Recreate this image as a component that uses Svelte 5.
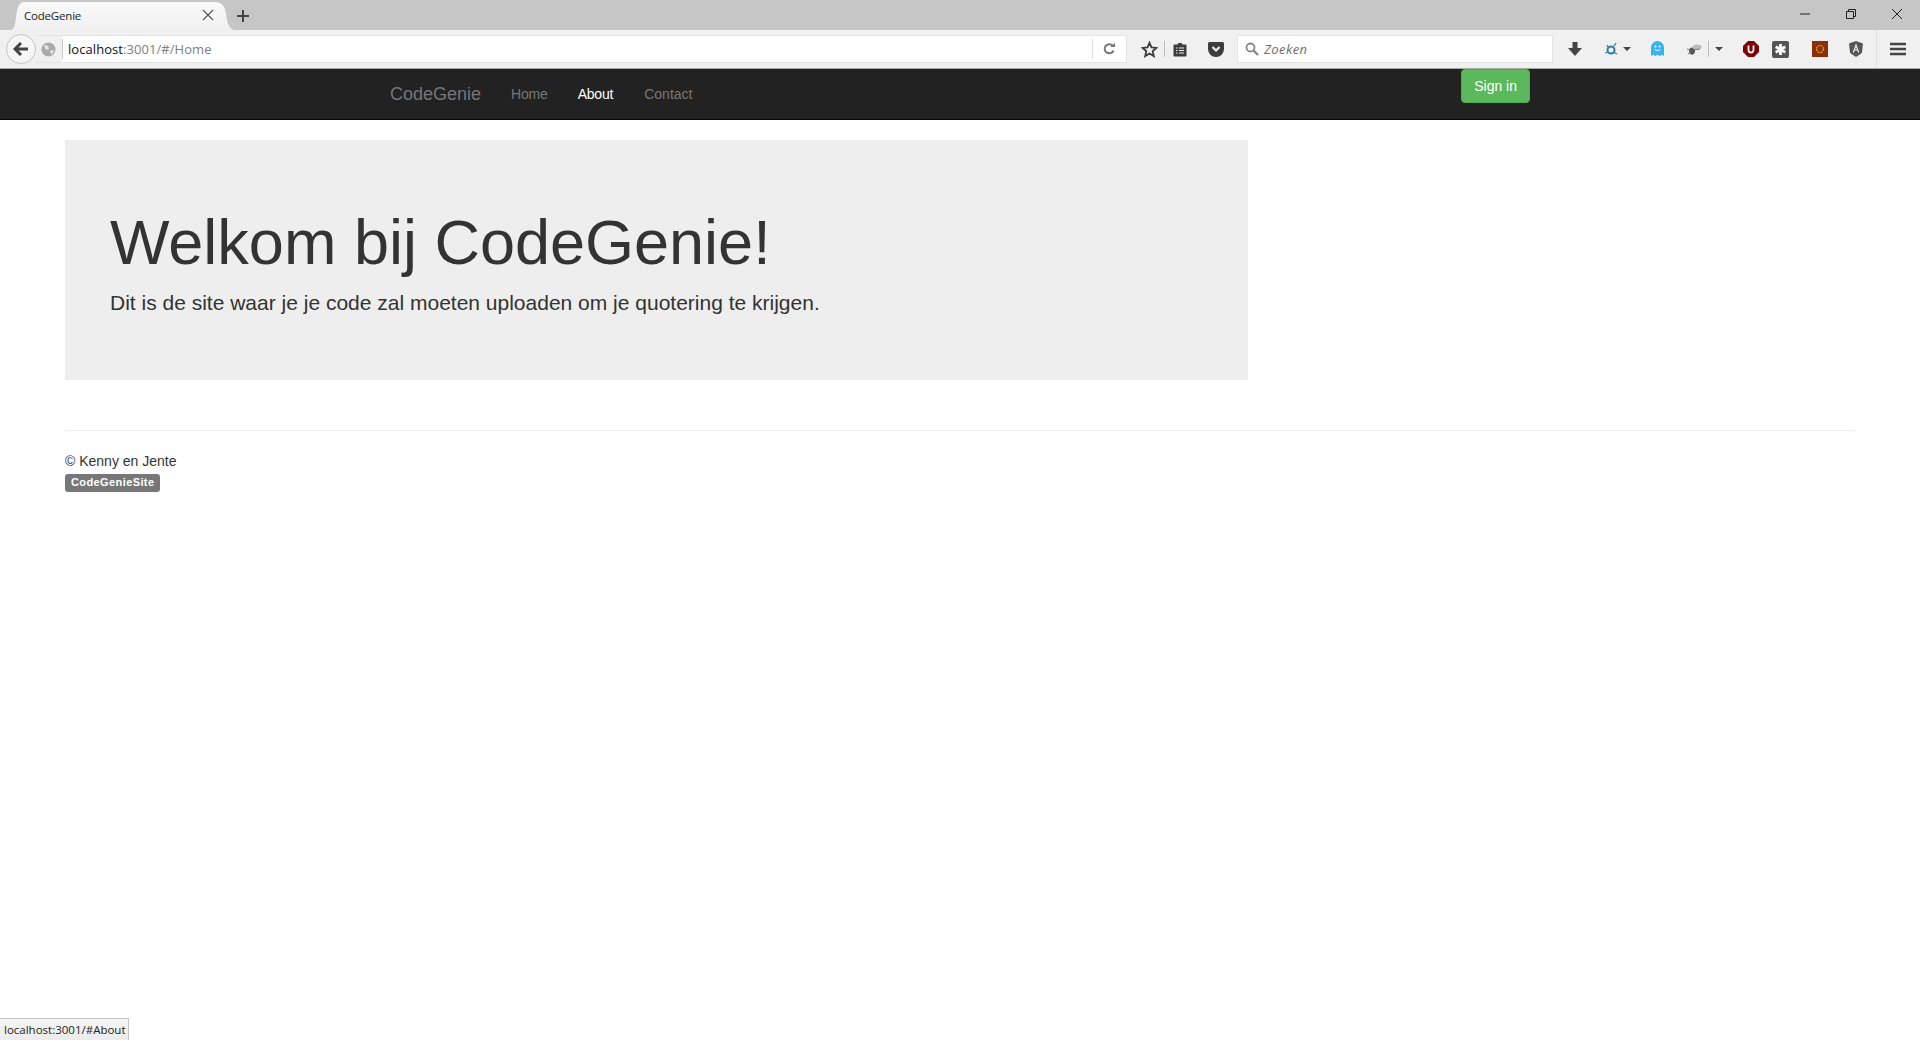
<script>
  const navItems = [
    { label: 'Home', active: false },
    { label: 'About', active: true },
    { label: 'Contact', active: false }
  ];
</script>

<div class="browser">
  <div class="tabstrip">
    <div class="tab">
      <svg class="flare" width="14" height="28" viewBox="0 0 14 28"><defs><linearGradient id="tg" x1="0" y1="0" x2="0" y2="1"><stop offset="0" stop-color="#f9f9f9"/><stop offset="1" stop-color="#f1f1f1"/></linearGradient></defs><path d="M0 28C4 28 5 24 6 16 7 6 9 0 14 0V28Z" fill="url(#tg)"/></svg>
      <div class="tab-body">
        <span class="tab-title">CodeGenie</span>
        <svg class="tab-close" width="12" height="12" viewBox="0 0 12 12"><path d="M1 1l10 10M11 1L1 11" stroke="#555" stroke-width="1.1" fill="none"/></svg>
      </div>
      <svg class="flare" width="21" height="28" viewBox="0 0 21 28"><path d="M0 0C8 0 11 4 12 12 13 22 16 28 21 28H0Z" fill="url(#tg)"/></svg>
    </div>
    <svg class="newtab" width="14" height="14" viewBox="0 0 14 14"><path d="M7 1v12M1 7h12" stroke="#444" stroke-width="2" fill="none"/></svg>
    <div class="winbtns">
      <svg width="12" height="12" viewBox="0 0 12 12"><path d="M1 6h10" stroke="#222" stroke-width="1"/></svg>
      <svg width="12" height="12" viewBox="0 0 12 12"><path d="M1.500 3.500h7v7h-7zM3.500 3.500v-2h7v7h-2" stroke="#222" stroke-width="1" fill="none"/></svg>
      <svg width="12" height="12" viewBox="0 0 12 12"><path d="M1 1l10 10M11 1L1 11" stroke="#222" stroke-width="1" fill="none"/></svg>
    </div>
  </div>

  <div class="toolbar">
    <div class="backbtn">
      <svg width="16" height="14" viewBox="0 0 16 14"><path d="M8 1L2 7l6 6M2.500 7H15" stroke="#444" stroke-width="3" fill="none"/></svg>
    </div>
    <div class="urlbar">
      <svg class="globe" width="15" height="15" viewBox="0 0 15 15"><circle cx="7.500" cy="7.500" r="7" fill="#aaa"/><path d="M3 3l4 1 1 3-3 1zM9 9l4-1-2 5z" fill="#e8e8e8"/></svg>
      <span class="urlsep"></span>
      <span class="url"><span class="host">localhost</span>:3001/#/Home</span>
      <span class="reloadsep"></span>
      <svg class="reload" width="14" height="14" viewBox="0 0 14 14"><path d="M11.500 8.500A4.600 4.600 0 1 1 10.500 3.500" stroke="#777" stroke-width="2" fill="none"/><path d="M8 5h5V1z" fill="#777"/></svg>
    </div>
    <svg class="ico star" width="17" height="17" viewBox="0 0 17 17"><path d="M8.500 1.800l2 4.600 5 .5-3.800 3.300 1.100 4.900-4.300-2.600-4.300 2.600 1.100-4.900L1.500 6.900l5-.5z" stroke="#3c3c3c" stroke-width="1.800" fill="none"/></svg>
    <span class="sep1"></span>
    <svg class="ico clip" width="14" height="15" viewBox="0 0 14 15"><path d="M1.500 2.500h3l1-1.500h3l1 1.500h3a1 1 0 0 1 1 1v10a1 1 0 0 1-1 1h-11a1 1 0 0 1-1-1v-10a1 1 0 0 1 1-1z" fill="#3c3c3c"/><path d="M3 6h1.500M6 6h5M3 8.500h1.500M6 8.500h5M3 11h1.500M6 11h5" stroke="#f0f0f0" stroke-width="1.200"/></svg>
    <svg class="ico pocket" width="16" height="15" viewBox="0 0 16 15"><path d="M1.500 0h13A1.500 1.500 0 0 1 16 1.500V7A8 8 0 0 1 0 7V1.500A1.500 1.500 0 0 1 1.500 0z" fill="#3c3c3c"/><path d="M4.500 5L8 8.500 11.500 5" stroke="#f0f0f0" stroke-width="2.200" fill="none"/></svg>
    <div class="search">
      <svg width="14" height="14" viewBox="0 0 14 14"><circle cx="5.500" cy="5.500" r="4" stroke="#888" stroke-width="1.800" fill="none"/><path d="M8.500 8.500L13 13" stroke="#888" stroke-width="2.400"/></svg>
      <span>Zoeken</span>
    </div>
    <svg class="ico dl" width="14" height="14" viewBox="0 0 14 14"><path d="M4.500 0h5v6H14L7 14 0 6h4.500z" fill="#444"/></svg>
    <svg class="ico net" width="16" height="16" viewBox="0 0 16 16"><circle cx="7" cy="9" r="3.500" stroke="#2c7fa3" stroke-width="2" fill="none"/><path d="M10 5l2-3M4 11l-3 1M9 11l4 2M4.500 6.500L3 4" stroke="#2c7fa3" stroke-width="1.300"/></svg>
    <span class="caret c1"></span>
    <svg class="ico ghost" width="13" height="16" viewBox="0 0 13 16"><path d="M0 15V6.500a6.500 6.500 0 0 1 13 0V15l-2.200-1.300L8.700 15l-2.200-1.300L4.300 15l-2.200-1.300z" fill="#35b4ee"/><circle cx="4.500" cy="5.500" r="1" fill="#fff"/><circle cx="8.500" cy="5.500" r="1" fill="#fff"/><path d="M3.800 8.500Q6.500 10.800 9.200 8.500" stroke="#fff" fill="none"/></svg>
    <svg class="ico bug" width="16" height="13" viewBox="0 0 16 13"><ellipse cx="6" cy="8" rx="3" ry="3.500" fill="#555"/><ellipse cx="11" cy="4" rx="4.500" ry="2.500" fill="#bbb"/><path d="M1 6l4 1M2 11l3-2M6 12l1-2M8 7l6-1" stroke="#777"/></svg>
    <span class="sep2"></span>
    <span class="caret c2"></span>
    <svg class="ico ublock" width="16" height="16" viewBox="0 0 16 16"><path d="M5 0h6l5 5v6l-5 5H5l-5-5V5z" fill="#800000"/><path d="M5.500 4.500V9a2.500 2.500 0 0 0 5 0V4.500" stroke="#fff" stroke-width="1.800" fill="none"/></svg>
    <svg class="ico ext" width="17" height="17" viewBox="0 0 17 17"><rect width="17" height="17" rx="2" fill="#555"/><path d="M8.500 3v11M3.700 5.700l9.600 5.600M13.300 5.700l-9.600 5.600" stroke="#fff" stroke-width="2.800"/></svg>
    <svg class="ico sun" width="16" height="16" viewBox="0 0 16 16"><rect width="16" height="16" fill="#8b2f08"/><circle cx="8" cy="8" r="3.500" stroke="#d09020" stroke-width="1.600" stroke-dasharray="2 .8" fill="none"/></svg>
    <svg class="ico ng" width="14" height="16" viewBox="0 0 14 16"><path d="M7 0l7 2.500-1.100 9.500L7 16 1.100 12 0 2.500z" fill="#555"/><path d="M4.300 11.500L7 4l2.700 7.500M5.200 9h3.600" stroke="#eee" stroke-width="1.200" fill="none"/></svg>
    <span class="sep3"></span>
    <svg class="ico menu" width="16" height="14" viewBox="0 0 16 14"><path d="M0 2h16M0 7h16M0 12h16" stroke="#444" stroke-width="2.600"/></svg>
  </div>
</div>

<nav class="navbar">
  <div class="nav-container">
    <a class="brand" href="#/">CodeGenie</a>
    <ul class="nav">
      {#each navItems as item}
        <li class:active={item.active}>{item.label}</li>
      {/each}
    </ul>
    <button class="signin">Sign in</button>
  </div>
</nav>

<main class="page">
  <section class="jumbotron">
    <h1>Welkom bij CodeGenie!</h1>
    <p>Dit is de site waar je je code zal moeten uploaden om je quotering te krijgen.</p>
  </section>
  <hr />
  <footer>
    <div>© Kenny en Jente</div>
    <span class="label">CodeGenieSite</span>
  </footer>
</main>

<div class="status">localhost:3001/#About</div>

<style>
  :global(body) {
    margin: 0;
    background: #fff;
    font-family: "Liberation Sans", Arial, sans-serif;
    color: #333;
    overflow: hidden;
  }
  .browser {
    font-family: "Open Sans", "Noto Sans", sans-serif;
  }
  .tabstrip {
    height: 30px;
    background: #c6c6c6;
    display: flex;
    align-items: flex-end;
    box-sizing: border-box;
    padding-left: 10px;
  }
  .tab {
    height: 28px;
    display: flex;
    flex: none;
  }
  .flare {
    display: block;
    flex: none;
  }
  .tab-body {
    width: 190px;
    height: 28px;
    background: linear-gradient(#f9f9f9, #f1f1f1);
    display: flex;
    align-items: center;
    justify-content: space-between;
    box-sizing: border-box;
    padding: 0 0 2px 0;
  }
  .tab-title {
    font-size: 11.500px;
    letter-spacing: -.2px;
    color: #222;
  }
  .newtab {
    margin: 0 0 7px 1px;
  }
  .winbtns {
    margin-left: auto;
    height: 30px;
    display: flex;
    align-items: flex-start;
    gap: 34px;
    padding: 8px 17px 0 0;
    box-sizing: border-box;
  }
  .toolbar {
    height: 39px;
    background: #f0f0f0;
    border-bottom: 1px solid #a8a8a8;
    box-sizing: border-box;
    display: flex;
    align-items: center;
    padding-left: 6px;
  }
  .backbtn {
    width: 30px;
    height: 30px;
    border-radius: 50%;
    border: 1px solid #c4c4c4;
    background: #f6f6f6;
    box-sizing: border-box;
    display: flex;
    align-items: center;
    justify-content: center;
    flex: none;
  }
  .urlbar {
    width: 1091px;
    height: 28px;
    border: 1px solid #e4e4e4;
    border-left: none;
    box-sizing: border-box;
    display: flex;
    align-items: center;
    flex: none;
    background: linear-gradient(90deg, #f0f0f0 0 26px, #fff 26px);
  }
  .globe {
    margin-left: 5px;
    flex: none;
  }
  .urlsep {
    width: 1px;
    height: 20px;
    background: #ccc;
    margin-left: 6px;
  }
  .url {
    font-size: 13px;
    letter-spacing: .06px;
    color: #808080;
    margin-left: 5px;
    flex: 1;
  }
  .host {
    color: #111;
  }
  .reloadsep {
    width: 1px;
    height: 20px;
    background: #ddd;
  }
  .reload {
    margin: 0 10px 0 9px;
    flex: none;
  }
  .ico {
    flex: none;
  }
  .star { margin-left: 14px; }
  .sep1 { width: 1px; height: 16px; background: #bbb; margin-left: 6px; }
  .clip { margin-left: 8px; }
  .pocket { margin-left: 21px; }
  .search {
    width: 316px;
    height: 28px;
    margin-left: 13px;
    flex: none;
    background: #fff;
    border: 1px solid #e4e4e4;
    box-sizing: border-box;
    display: flex;
    align-items: center;
    padding-left: 7px;
    gap: 5px;
    font-size: 13px;
    font-style: italic;
    color: #6d6d6d;
    letter-spacing: .4px;
  }
  .dl { margin-left: 15px; }
  .net { margin-left: 22px; }
  .caret {
    width: 0;
    height: 0;
    border-left: 4px solid transparent;
    border-right: 4px solid transparent;
    border-top: 4px solid #444;
    flex: none;
  }
  .c1 { margin-left: 3px; }
  .ghost { margin-left: 20px; }
  .bug { margin-left: 22px; }
  .sep2 { width: 1px; height: 16px; background: #bbb; margin-left: 6px; }
  .c2 { margin-left: 6px; }
  .ublock { margin-left: 20px; }
  .ext { margin-left: 13px; }
  .sun { margin-left: 23px; }
  .ng { margin-left: 21px; }
  .sep3 { width: 1px; height: 38px; background: #e0e0e0; margin-left: 13px; }
  .menu { margin-left: 13px; }

  .navbar {
    height: 51px;
    background: #222;
    border-bottom: 1px solid #080808;
    box-sizing: border-box;
  }
  .nav-container {
    width: 1170px;
    margin: 0 auto;
    padding: 0 15px;
    box-sizing: border-box;
    display: flex;
    align-items: flex-start;
  }
  .brand {
    font-size: 18px;
    line-height: 20px;
    padding: 15px 0;
    color: #777;
    text-decoration: none;
  }
  .nav {
    list-style: none;
    margin: 0 0 0 15px;
    padding: 0;
    display: flex;
  }
  .nav li {
    font-size: 14px;
    line-height: 20px;
    padding: 15px;
    color: #777;
    letter-spacing: -.2px;
  }
  .nav li:last-child {
    letter-spacing: 0;
    margin-left: 1px;
  }
  .nav li.active {
    color: #fff;
  }
  .signin {
    margin-left: auto;
    height: 34px;
    padding: 6px 12px;
    font: 14px/20px "Liberation Sans", Arial, sans-serif;
    color: #fff;
    background: #5cb85c;
    border: 1px solid #4cae4c;
    border-radius: 4px;
    box-sizing: border-box;
  }

  .page {
    padding: 20px 65px 0;
  }
  .jumbotron {
    width: 1183px;
    height: 240px;
    box-sizing: border-box;
    background: #eee;
    padding: 48px 45px;
    margin-bottom: 50px;
  }
  h1 {
    font-size: 63px;
    font-weight: 500;
    line-height: 69px;
    margin: 20px 0 10px;
    color: #333;
  }
  .jumbotron p {
    font-size: 21px;
    line-height: 32px;
    margin: 0 0 15px;
    font-weight: 200;
  }
  hr {
    border: 0;
    border-top: 1px solid #eee;
    margin: 0 0 20px;
  }
  footer {
    font-size: 14px;
    line-height: 20px;
  }
  .label {
    display: inline-block;
    vertical-align: top;
    margin-top: 3px;
    background: #777;
    color: #fff;
    font-size: 11px;
    font-weight: 700;
    line-height: 11px;
    padding: 3px 6px 4px;
    border-radius: 3px;
    letter-spacing: .4px;
  }
  .status {
    position: fixed;
    left: 0;
    bottom: 0;
    height: 22px;
    width: 129px;
    box-sizing: border-box;
    background: linear-gradient(#f6f6f6, #ececec);
    border: 1px solid #c4c4c4;
    border-left: none;
    border-bottom: none;
    font: 11.500px/22px "Open Sans", "Noto Sans", sans-serif;
    color: #222;
    padding-left: 4px;
    white-space: nowrap;
  }
</style>
